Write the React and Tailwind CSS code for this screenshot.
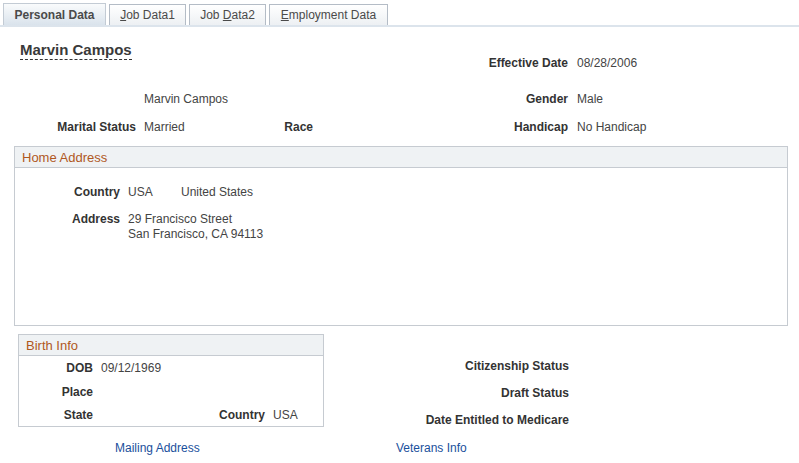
const grid = "grid grid-cols-[136px_128px_49px_105px_150px_1fr] leading-[14px]";

function Tab({ children, active, w }) {
  return (
    <div
      className={
        "border border-b-0 flex items-center justify-center " +
        w +
        (active
          ? " border-[#c3cbd4] bg-gradient-to-b from-[#f9fbfc] to-[#dae3ec] font-bold text-[#4a4a4a] h-[22px]"
          : " border-[#b4bcc6] bg-gradient-to-b from-white to-[#edf0f3] text-[#4a4a4a] h-[21px]")
      }
    >
      {children}
    </div>
  );
}

export default function App() {
  return (
    <div className="w-[799px] h-[463px] bg-white font-['Liberation_Sans',Arial,sans-serif] text-[12px] text-[#333] overflow-hidden">
      {/* Tabs */}
      <div className="h-[27px] pt-[4px] pl-[3px] border-b-[2px] border-[#dce4ec] flex items-end gap-[3px]">
        <Tab active w="w-[103px]">Personal Data</Tab>
        <Tab w="w-[77px]">
          <span>
            <span className="underline">J</span>ob Data1
          </span>
        </Tab>
        <Tab w="w-[77px]">
          <span>
            Job <span className="underline">D</span>ata2
          </span>
        </Tab>
        <Tab w="w-[119px]">
          <span>
            <span className="underline">E</span>mployment Data
          </span>
        </Tab>
      </div>

      {/* Header rows */}
      <div className={grid + " mt-[15px] items-start"}>
        <div className="col-span-4 pl-[20px]">
          <span className="inline-block text-[15px] leading-[16px] font-bold text-[#3a3a3a] pb-[1px] border-b border-dashed border-[#333]">
            Marvin Campos
          </span>
        </div>
        <div className="text-right font-bold pt-[14px]">Effective Date</div>
        <div className="pl-[9px] pt-[14px] text-[#444]">08/28/2006</div>
      </div>

      <div className={grid + " mt-[22px]"}>
        <div></div>
        <div className="pl-[8px] text-[#444]">Marvin Campos</div>
        <div></div>
        <div></div>
        <div className="text-right font-bold">Gender</div>
        <div className="pl-[9px] text-[#444]">Male</div>
      </div>

      <div className={grid + " mt-[14px]"}>
        <div className="text-right font-bold">Marital Status</div>
        <div className="pl-[8px] text-[#444]">Married</div>
        <div className="text-right font-bold">Race</div>
        <div></div>
        <div className="text-right font-bold">Handicap</div>
        <div className="pl-[9px] text-[#444]">No Handicap</div>
      </div>

      {/* Home Address */}
      <div className="ml-[14px] mt-[12px] w-[774px] h-[180px] border border-[#c6cbd1]">
        <div className="h-[21px] bg-[#eff2f4] border-b border-[#c6cbd1] flex items-center pl-[7px] text-[13px] text-[#b0581e] leading-[15px]">
          Home Address
        </div>
        <div className="pt-[17px] leading-[14px]">
          <div className="flex">
            <div className="w-[105px] text-right font-bold">Country</div>
            <div className="pl-[8px] w-[61px] text-[#444]">USA</div>
            <div className="text-[#444]">United States</div>
          </div>
          <div className="flex mt-[13px]">
            <div className="w-[105px] text-right font-bold">Address</div>
            <div className="pl-[8px] text-[#444] leading-[15px]">
              29 Francisco Street
              <br />
              San Francisco, CA 94113
            </div>
          </div>
        </div>
      </div>

      {/* Birth info and right column */}
      <div className="flex mt-[8px]">
        <div className="ml-[18px] w-[306px] h-[93px] border border-[#c6cbd1]">
          <div className="h-[21px] bg-[#eff2f4] border-b border-[#c6cbd1] flex items-center pl-[7px] text-[13px] text-[#b0581e] leading-[15px]">
            Birth Info
          </div>
          <div className="pt-[5px] leading-[14px]">
            <div className="flex">
              <div className="w-[74px] text-right font-bold">DOB</div>
              <div className="pl-[8px] text-[#444]">09/12/1969</div>
            </div>
            <div className="flex mt-[10px]">
              <div className="w-[74px] text-right font-bold">Place</div>
            </div>
            <div className="flex mt-[9px]">
              <div className="w-[74px] text-right font-bold">State</div>
              <div className="w-[172px] text-right font-bold">Country</div>
              <div className="pl-[8px] text-[#444]">USA</div>
            </div>
          </div>
        </div>
        <div className="w-[245px] pt-[25px] flex flex-col gap-[13px] leading-[14px] font-bold text-right">
          <div>Citizenship Status</div>
          <div>Draft Status</div>
          <div>Date Entitled to Medicare</div>
        </div>
      </div>

      {/* Links */}
      <div className="flex mt-[14px] leading-[14px] text-[#1a4f9c]">
        <div className="pl-[115px] w-[396px]">Mailing Address</div>
        <div>Veterans Info</div>
      </div>
    </div>
  );
}
